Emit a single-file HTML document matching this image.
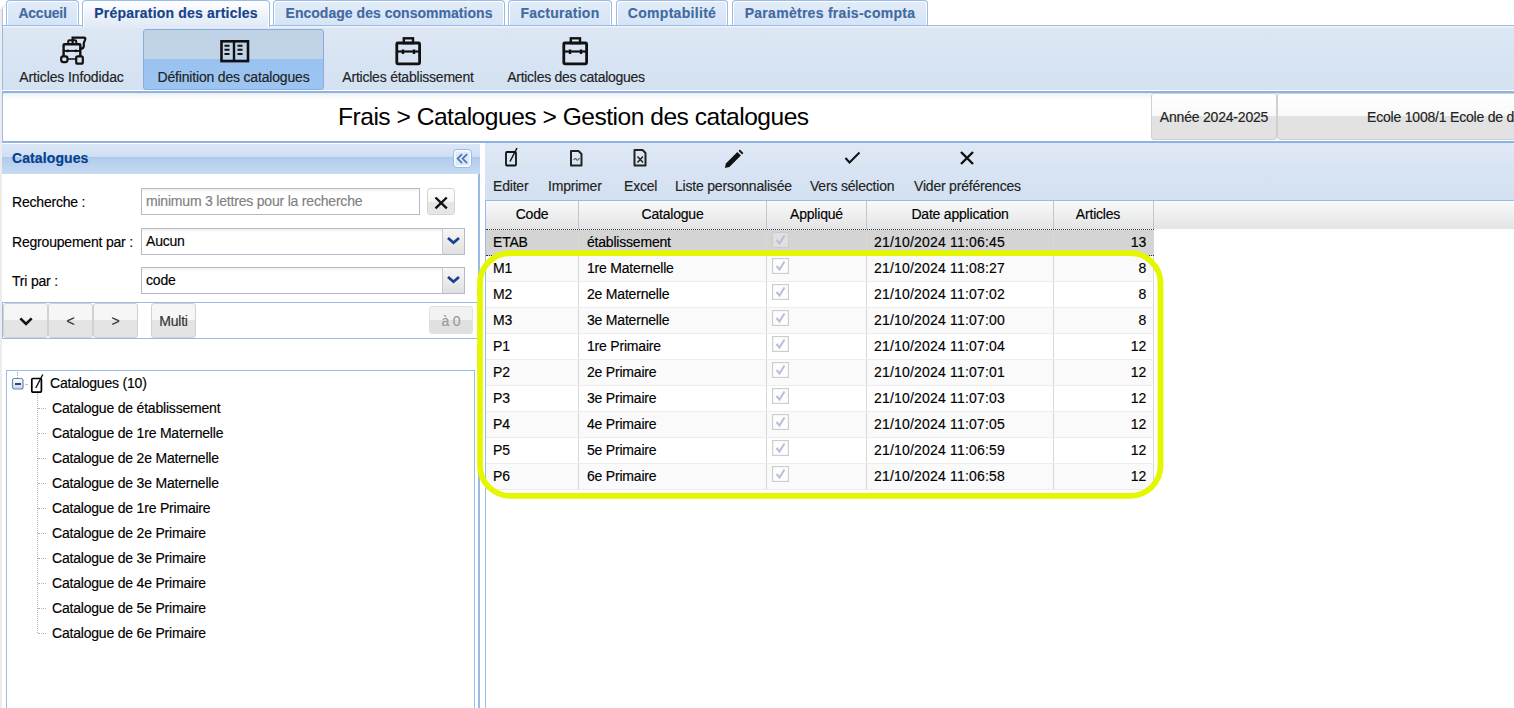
<!DOCTYPE html>
<html><head><meta charset="utf-8">
<style>
*{box-sizing:border-box;margin:0;padding:0}
html,body{width:1514px;height:708px;overflow:hidden;background:#fff;font-family:"Liberation Sans",sans-serif;font-size:14px;letter-spacing:-0.2px;color:#000;-webkit-text-stroke:0.15px currentColor}
.a{position:absolute;white-space:nowrap}
/* tabs */
.tab{position:absolute;top:0;height:25px;border:1px solid #99bbe8;border-bottom:none;border-radius:4px 4px 0 0;box-shadow:inset 1px 1px 0 #fff,inset -1px 0 0 #fff;background:linear-gradient(#e3ecf8,#d6e4f6);font-weight:bold;font-size:14px;color:#416aa3;text-align:center;line-height:24px}
.tab.act{background:linear-gradient(#ffffff,#dfe9f6);color:#15428b;height:27px;z-index:3;border-color:#99bbe8}
.tbtn{position:absolute;top:29px;height:61px;text-align:center;color:#222}
.tbtn .lbl{position:absolute;left:0;right:0;top:40px;line-height:16px}
.btn{position:absolute;border:1px solid #d1d1d1;border-radius:3px;background:linear-gradient(#f6f6f6 0,#f6f6f6 50%,#e4e4e4 50%,#e4e4e4 100%);text-align:center}
.hd{font-weight:normal}
</style></head><body>
<!-- left gray strip -->
<div class="a" style="left:0;top:3px;width:12px;height:705px;border-left:2px solid #ececec;border-top:2px solid #f4f4f4;border-top-left-radius:9px"></div>
<div class="a" style="left:2px;top:9px;width:1px;height:17px;background:#a9c4ea"></div>

<!-- TAB STRIP -->
<div class="a" style="left:2px;top:25px;width:1512px;height:1px;background:#99bbe8"></div>
<div class="tab" style="left:6px;width:73px;letter-spacing:-0.24px">Accueil</div>
<div class="tab act" style="left:82px;width:188px;letter-spacing:0.2px">Préparation des articles</div>
<div class="tab" style="left:273px;width:232px;letter-spacing:0.03px">Encodage des consommations</div>
<div class="tab" style="left:508px;width:104px;letter-spacing:0.25px">Facturation</div>
<div class="tab" style="left:616px;width:112px;letter-spacing:0.3px">Comptabilité</div>
<div class="tab" style="left:732px;width:196px;letter-spacing:0.28px">Paramètres frais-compta</div>

<!-- TOOLBAR -->
<div class="a" style="left:2px;top:26px;width:1512px;height:64px;background:linear-gradient(#eef3fa 0,#eef3fa 1px,#dde7f4 2px,#d3e1f1);border-left:1px solid #99bbe8"></div>
<div class="a" style="left:2px;top:90px;width:1512px;height:1px;background:#fff"></div>
<div class="a" style="left:2px;top:91px;width:1512px;height:2px;background:#8db2e3"></div>

<div class="tbtn" style="left:3px;width:137px"><div class="lbl" style="letter-spacing:-0.12px">Articles Infodidac</div></div>
<div class="tbtn" style="left:143px;width:181px;border:1px solid #89acdc;border-radius:3px;background:linear-gradient(#bfd2e6 0,#c0d3e7 29px,#98c2f0 29px,#9dc5f1 100%)"><div class="lbl" style="top:39px;letter-spacing:-0.18px">Définition des catalogues</div></div>
<div class="tbtn" style="left:330px;width:156px"><div class="lbl" style="letter-spacing:-0.22px">Articles établissement</div></div>
<div class="tbtn" style="left:497px;width:158px"><div class="lbl" style="letter-spacing:-0.28px">Articles des catalogues</div></div>


<!-- top toolbar icons -->
<svg class="a" style="left:55px;top:32px" width="40" height="36">
 <path d="M17.6 11.5 V5.6 H28.5 Q31.2 5.2 30 8 Q28.3 11 28.8 13.5 Q29 16.5 25 17" fill="none" stroke="#111" stroke-width="2.2"/>
 <path d="M8.6 24 V13 Q8.6 12.3 9.5 12.3 H24.5 Q25.3 12.3 25.3 13 V24" fill="none" stroke="#111" stroke-width="2.4"/>
 <path d="M13.2 12 V9.6 Q13.2 8.3 14.5 8.3 H20 Q21.3 8.3 21.3 9.6 V12" fill="none" stroke="#111" stroke-width="2"/>
 <path d="M9 18.9 H25" stroke="#111" stroke-width="1.9"/>
 <circle cx="12.8" cy="18.9" r="1.3" fill="#111"/><circle cx="20.9" cy="18.9" r="1.3" fill="#111"/>
 <rect x="6.2" y="24.3" width="6.3" height="5.8" rx="2" fill="#d7e3f2" stroke="#111" stroke-width="2.2"/>
 <rect x="21.2" y="24.3" width="6.6" height="7.4" rx="1.5" fill="#d7e3f2" stroke="#111" stroke-width="2.2"/>
 <path d="M12.5 27 H21" stroke="#111" stroke-width="1.5"/>
</svg>
<svg class="a" style="left:213px;top:32px" width="40" height="36">
 <rect x="8.5" y="9.3" width="26.5" height="19.8" fill="none" stroke="#111" stroke-width="2.6"/>
 <path d="M21 9.5 V29" stroke="#111" stroke-width="2.4"/>
 <path d="M11.5 13.8 H16.5 M11.5 17.8 H16.5 M11.5 22 H16.5 M24.5 13.8 H29.5 M24.5 17.8 H29.5 M24.5 22 H29.5" stroke="#111" stroke-width="2"/>
</svg>
<svg class="a" style="left:388px;top:32px" width="40" height="36">
 <rect x="8.8" y="11" width="22.8" height="20.8" rx="1" fill="none" stroke="#111" stroke-width="2.8"/>
 <rect x="15.8" y="6.3" width="9.2" height="4.8" fill="none" stroke="#111" stroke-width="2.4"/>
 <path d="M9 19.5 H31.5" stroke="#111" stroke-width="2.2"/>
 <path d="M15 17.5 V22 M26 17.5 V22" stroke="#111" stroke-width="2.4"/>
</svg>
<svg class="a" style="left:555px;top:32px" width="40" height="36">
 <rect x="8.8" y="11" width="22.8" height="20.8" rx="1" fill="none" stroke="#111" stroke-width="2.8"/>
 <rect x="15.8" y="6.3" width="9.2" height="4.8" fill="none" stroke="#111" stroke-width="2.4"/>
 <path d="M9 19.5 H31.5" stroke="#111" stroke-width="2.2"/>
 <path d="M15 17.5 V22 M26 17.5 V22" stroke="#111" stroke-width="2.4"/>
</svg>

<!-- TITLE BAR -->
<div class="a" style="left:2px;top:93px;width:1512px;height:48px;background:linear-gradient(#e8ebeb 0,#f7f8f8 3px,#fff 8px,#fff);border-left:1px solid #99bbe8"></div>
<div class="a" style="left:2px;top:141px;width:1512px;height:2px;background:#8db2e3"></div>
<div class="a" style="left:338px;top:102px;font-size:24.6px;letter-spacing:-0.5px;line-height:30px;-webkit-text-stroke:0">Frais &gt; Catalogues &gt; Gestion des catalogues</div>
<div class="btn" style="left:1151px;top:93px;width:126px;height:47px;background:linear-gradient(#fff 0,#f9f9f9 50%,#e2e2e2 50%,#e2e2e2 100%);border-color:#d0d0d0;line-height:47px;color:#222">Année 2024-2025</div>
<div class="btn" style="left:1277px;top:93px;width:260px;height:47px;background:linear-gradient(#fff 0,#f9f9f9 50%,#e2e2e2 50%,#e2e2e2 100%);border-color:#d0d0d0;line-height:47px;color:#222;text-align:left;padding-left:89px">Ecole 1008/1 Ecole de de</div>

<div class="a" style="left:2px;top:143px;width:478px;height:1px;background:#fff"></div>


<!-- LEFT PANEL -->
<div class="a" style="left:2px;top:144px;width:478px;height:30px;background:linear-gradient(#dbe7f6 0,#cfdff4 13px,#a9c6ec 13px,#b3cdee 15px,#bcd3f0 22px,#c8dbf2 30px)"></div>
<div class="a" style="left:12px;top:150px;font-weight:bold;font-size:14px;color:#04408c;line-height:16px;letter-spacing:0.1px">Catalogues</div>
<div class="a" style="left:453px;top:149px;width:19px;height:19px;border:1px solid #99bbe8;border-radius:4px;background:#dde9f9;box-shadow:inset 0 0 0 1.5px #fbfdff">
<svg width="17" height="17" style="position:absolute;left:0;top:0"><path d="M7.6 4.6 L3.6 8.6 L7.6 12.6 M12.6 4.6 L8.6 8.6 L12.6 12.6" fill="none" stroke="#4677b4" stroke-width="1.7" stroke-linecap="round"/></svg></div>
<div class="a" style="left:478px;top:174px;width:2px;height:534px;background:#99bbe8"></div>

<div class="a" style="left:12px;top:194px;line-height:16px">Recherche :</div>
<div class="a" style="left:12px;top:234px;line-height:16px">Regroupement par :</div>
<div class="a" style="left:12px;top:273px;line-height:16px">Tri par :</div>

<div class="a" style="left:141px;top:188px;width:279px;height:27px;border:1px solid #b5b8c8;background:linear-gradient(#f0f0f0 0,#fff 4px,#fff);color:#808080;padding-left:4px;line-height:25px">minimum 3 lettres pour la recherche</div>
<div class="btn" style="left:427px;top:188px;width:28px;height:27px;background:linear-gradient(#fdfdfd 0,#f6f6f6 50%,#e6e6e6 50%,#e6e6e6 100%);border-color:#d4d4d4;border-radius:3px">
<svg width="26" height="25" style="position:absolute;left:0;top:0"><path d="M7.5 8.5 L18.8 19.3 M18.8 8.5 L7.5 19.3" fill="none" stroke="#111" stroke-width="2.4"/></svg></div>

<div class="a" style="left:141px;top:228px;width:324px;height:27px;border:1px solid #b5b8c8;background:linear-gradient(#f0f0f0 0,#fff 4px,#fff);padding-left:4px;line-height:25px">Aucun</div>
<div class="a" style="left:442px;top:228px;width:23px;height:27px;border:1px solid #b5b8c8;border-left-color:#c8c8d0;background:linear-gradient(#f6f6f6,#e0e0e0)">
<svg width="21" height="25" style="position:absolute;left:0;top:0"><path d="M5 9 L10.5 13.8 L16 9" fill="none" stroke="#15428b" stroke-width="2.7"/></svg></div>
<div class="a" style="left:141px;top:267px;width:324px;height:27px;border:1px solid #b5b8c8;background:linear-gradient(#f0f0f0 0,#fff 4px,#fff);padding-left:4px;line-height:25px">code</div>
<div class="a" style="left:442px;top:267px;width:23px;height:27px;border:1px solid #b5b8c8;border-left-color:#c8c8d0;background:linear-gradient(#f6f6f6,#e0e0e0)">
<svg width="21" height="25" style="position:absolute;left:0;top:0"><path d="M5 9 L10.5 13.8 L16 9" fill="none" stroke="#15428b" stroke-width="2.7"/></svg></div>

<!-- button bar -->
<div class="a" style="left:2px;top:302px;width:476px;height:37px;border-top:1px solid #99bbe8;border-bottom:1px solid #99bbe8;border-left:1px solid #99bbe8;background:#fff"></div>
<div class="btn" style="left:3px;top:303px;width:45px;height:35px">
<svg width="43" height="33" style="position:absolute;left:0;top:0"><path d="M16.3 14.3 L22 20 L27.7 14.3" fill="none" stroke="#111" stroke-width="2.6"/></svg></div>
<div class="btn" style="left:48px;top:303px;width:45px;height:35px;line-height:35px;color:#333">&lt;</div>
<div class="btn" style="left:93px;top:303px;width:45px;height:35px;line-height:35px;color:#333">&gt;</div>
<div class="btn" style="left:151px;top:303px;width:45px;height:35px;line-height:35px;color:#333">Multi</div>
<div class="btn" style="left:429px;top:306px;width:44px;height:28px;line-height:28px;color:#999;background:linear-gradient(#f2f2f2 0,#f2f2f2 50%,#e0e0e0 50%,#e0e0e0 100%);border-color:#e0e0e0">à 0</div>

<!-- tree -->
<div class="a" style="left:6px;top:370px;width:469px;height:340px;border:1px solid #99bbe8;background:#fff"></div>
<div class="a" style="left:17px;top:372px;width:0;height:6px;border-left:1px dotted #b4b4b4"></div>
<div class="a" style="left:37px;top:393px;width:0;height:240px;border-left:1px dotted #b4b4b4"></div>
<svg class="a" style="left:11px;top:377px" width="14" height="14"><defs><linearGradient id="mg" x1="0" y1="0" x2="0" y2="1"><stop offset="0" stop-color="#fff"/><stop offset="1" stop-color="#c9d8ee"/></linearGradient></defs><rect x="1.5" y="1.5" width="10.5" height="10.5" rx="2" fill="url(#mg)" stroke="#6a88b4" stroke-width="1.2"/><rect x="4" y="6" width="6" height="2" fill="#2b4a7a"/></svg>
<div class="a" style="left:25px;top:384px;width:2px;border-top:1px dotted #c0c0c0"></div>
<svg class="a" style="left:29px;top:372px" width="16" height="22"><rect x="2.8" y="6.5" width="9.6" height="13.6" rx="1" fill="none" stroke="#000" stroke-width="1.7"/><path d="M6.8 16 L13.8 2.5" stroke="#111" stroke-width="1.4" fill="none"/></svg>
<div class="a" style="left:50px;top:375px;line-height:16px">Catalogues (10)</div>
<div class="a" style="left:38px;top:408px;width:8px;border-top:1px dotted #b4b4b4"></div><div class="a" style="left:52px;top:400px;line-height:16px">Catalogue de établissement</div>
<div class="a" style="left:38px;top:433px;width:8px;border-top:1px dotted #b4b4b4"></div><div class="a" style="left:52px;top:425px;line-height:16px">Catalogue de 1re Maternelle</div>
<div class="a" style="left:38px;top:458px;width:8px;border-top:1px dotted #b4b4b4"></div><div class="a" style="left:52px;top:450px;line-height:16px">Catalogue de 2e Maternelle</div>
<div class="a" style="left:38px;top:483px;width:8px;border-top:1px dotted #b4b4b4"></div><div class="a" style="left:52px;top:475px;line-height:16px">Catalogue de 3e Maternelle</div>
<div class="a" style="left:38px;top:508px;width:8px;border-top:1px dotted #b4b4b4"></div><div class="a" style="left:52px;top:500px;line-height:16px">Catalogue de 1re Primaire</div>
<div class="a" style="left:38px;top:533px;width:8px;border-top:1px dotted #b4b4b4"></div><div class="a" style="left:52px;top:525px;line-height:16px">Catalogue de 2e Primaire</div>
<div class="a" style="left:38px;top:558px;width:8px;border-top:1px dotted #b4b4b4"></div><div class="a" style="left:52px;top:550px;line-height:16px">Catalogue de 3e Primaire</div>
<div class="a" style="left:38px;top:583px;width:8px;border-top:1px dotted #b4b4b4"></div><div class="a" style="left:52px;top:575px;line-height:16px">Catalogue de 4e Primaire</div>
<div class="a" style="left:38px;top:608px;width:8px;border-top:1px dotted #b4b4b4"></div><div class="a" style="left:52px;top:600px;line-height:16px">Catalogue de 5e Primaire</div>
<div class="a" style="left:38px;top:633px;width:8px;border-top:1px dotted #b4b4b4"></div><div class="a" style="left:52px;top:625px;line-height:16px">Catalogue de 6e Primaire</div>


<!-- RIGHT PANEL toolbar -->
<div class="a" style="left:485px;top:143px;width:1029px;height:57px;background:linear-gradient(#dfe8f5,#d2e0f1)"></div>
<svg class="a" style="left:485px;top:143px" width="560" height="30">
 <!-- editer -->
 <rect x="21" y="9" width="10" height="13.5" rx="1" fill="none" stroke="#111" stroke-width="1.8"/>
 <path d="M25 18.5 L32 5" stroke="#111" stroke-width="1.5" fill="none"/>
 <!-- imprimer -->
 <path d="M86 8 H93.5 L96.5 11 V22.5 H86 Z" fill="none" stroke="#222" stroke-width="2" stroke-linejoin="round"/>
 <path d="M88.5 17 Q90.5 14.5 91.5 16.5 T94.5 15" fill="none" stroke="#555" stroke-width="1.1"/>
 <!-- excel -->
 <path d="M149.5 7 H157.5 L160.5 10 V22.5 H149.5 Z" fill="none" stroke="#222" stroke-width="2" stroke-linejoin="round"/>
 <path d="M152.5 13.5 L158 19.5 M158 13.5 L152.5 19.5" stroke="#222" stroke-width="1.5"/>
 <!-- pencil -->
 <g transform="translate(-1.6,1.6)"><path d="M241.5 23.5 L242.5 19 L254 7.5 L257.5 11 L246 22.5 Z" fill="#111"/>
 <path d="M255.2 6.3 L256.5 5 L260 8.5 L258.7 9.8 Z" fill="#111"/></g>
 <!-- check -->
 <path d="M360.5 15 L364.5 19.5 L374.5 9.5" fill="none" stroke="#111" stroke-width="2"/>
 <!-- X -->
 <path d="M476 9 L488 21 M488 9 L476 21" fill="none" stroke="#111" stroke-width="2.4"/>
</svg>
<div class="a" style="left:493px;top:178px;line-height:16px;color:#222">Editer</div>
<div class="a" style="left:548px;top:178px;line-height:16px;color:#222">Imprimer</div>
<div class="a" style="left:624px;top:178px;line-height:16px;color:#222">Excel</div>
<div class="a" style="left:675px;top:178px;line-height:16px;color:#222">Liste personnalisée</div>
<div class="a" style="left:810px;top:178px;line-height:16px;color:#222">Vers sélection</div>
<div class="a" style="left:914px;top:178px;line-height:16px;color:#222">Vider préférences</div>

<!-- GRID -->
<div class="a" style="left:485px;top:200px;width:1029px;height:508px;border-top:1px solid #99bbe8;border-left:1px solid #99bbe8;background:#fff"></div>
<div class="a" style="left:486px;top:201px;width:1028px;height:28px;background:linear-gradient(#f9f9f9,#e3e4e6)"></div>
<div class="a" style="left:486px;top:201px;width:93px;height:28px;border-right:1px solid #c5c5c5;text-align:center;line-height:26px">Code</div>
<div class="a" style="left:579px;top:201px;width:188px;height:28px;border-right:1px solid #c5c5c5;text-align:center;line-height:26px">Catalogue</div>
<div class="a" style="left:767px;top:201px;width:100px;height:28px;border-right:1px solid #c5c5c5;text-align:center;line-height:26px">Appliqué</div>
<div class="a" style="left:867px;top:201px;width:187px;height:28px;border-right:1px solid #c5c5c5;text-align:center;line-height:26px">Date application</div>
<div class="a" style="left:1054px;top:201px;width:100px;height:28px;border-right:1px solid #c5c5c5;text-align:center;line-height:26px;padding-right:11px">Articles</div>
<div class="a" style="left:486px;top:229px;width:668px;height:1px;border-top:1px dotted #333"></div>
<div class="a" style="left:486px;top:230px;width:668px;height:26px;background:#d4d4d4;border-bottom:1px dotted #333"></div>
<div class="a" style="left:578px;top:230px;width:1px;height:25px;background:#d8d8d8"></div><div class="a" style="left:766px;top:230px;width:1px;height:25px;background:#d8d8d8"></div><div class="a" style="left:866px;top:230px;width:1px;height:25px;background:#d8d8d8"></div><div class="a" style="left:1053px;top:230px;width:1px;height:25px;background:#d8d8d8"></div><div class="a" style="left:1153px;top:230px;width:1px;height:25px;background:#d8d8d8"></div><div class="a" style="left:493px;top:234px;line-height:16px">ETAB</div><div class="a" style="left:587px;top:234px;line-height:16px">établissement</div><svg class="a" style="left:772px;top:232px" width="17" height="16"><rect x="0.5" y="0.5" width="16" height="15" fill="#e0e0e0" stroke="#cdcdcd" stroke-width="1.3"/><path d="M4.5 8 L7.5 11.5 L12.5 3.5" fill="none" stroke="#b7c0da" stroke-width="2"/></svg><div class="a" style="left:874px;top:234px;line-height:16px;letter-spacing:0.19px">21/10/2024 11:06:45</div><div class="a" style="left:1054px;top:234px;width:92px;text-align:right;line-height:16px">13</div>
<div class="a" style="left:486px;top:256px;width:668px;height:26px;background:#fafafa;border-bottom:1px solid #ededed"></div>
<div class="a" style="left:578px;top:256px;width:1px;height:25px;background:#d8d8d8"></div><div class="a" style="left:766px;top:256px;width:1px;height:25px;background:#d8d8d8"></div><div class="a" style="left:866px;top:256px;width:1px;height:25px;background:#d8d8d8"></div><div class="a" style="left:1053px;top:256px;width:1px;height:25px;background:#d8d8d8"></div><div class="a" style="left:1153px;top:256px;width:1px;height:25px;background:#d8d8d8"></div><div class="a" style="left:493px;top:260px;line-height:16px">M1</div><div class="a" style="left:587px;top:260px;line-height:16px">1re Maternelle</div><svg class="a" style="left:772px;top:258px" width="17" height="16"><rect x="0.5" y="0.5" width="16" height="15" fill="#fdfdfd" stroke="#cdcdcd" stroke-width="1.3"/><path d="M4.5 8 L7.5 11.5 L12.5 3.5" fill="none" stroke="#b7c0da" stroke-width="2"/></svg><div class="a" style="left:874px;top:260px;line-height:16px;letter-spacing:0.19px">21/10/2024 11:08:27</div><div class="a" style="left:1054px;top:260px;width:92px;text-align:right;line-height:16px">8</div>
<div class="a" style="left:486px;top:282px;width:668px;height:26px;background:#fff;border-bottom:1px solid #ededed"></div>
<div class="a" style="left:578px;top:282px;width:1px;height:25px;background:#d8d8d8"></div><div class="a" style="left:766px;top:282px;width:1px;height:25px;background:#d8d8d8"></div><div class="a" style="left:866px;top:282px;width:1px;height:25px;background:#d8d8d8"></div><div class="a" style="left:1053px;top:282px;width:1px;height:25px;background:#d8d8d8"></div><div class="a" style="left:1153px;top:282px;width:1px;height:25px;background:#d8d8d8"></div><div class="a" style="left:493px;top:286px;line-height:16px">M2</div><div class="a" style="left:587px;top:286px;line-height:16px">2e Maternelle</div><svg class="a" style="left:772px;top:284px" width="17" height="16"><rect x="0.5" y="0.5" width="16" height="15" fill="#fdfdfd" stroke="#cdcdcd" stroke-width="1.3"/><path d="M4.5 8 L7.5 11.5 L12.5 3.5" fill="none" stroke="#b7c0da" stroke-width="2"/></svg><div class="a" style="left:874px;top:286px;line-height:16px;letter-spacing:0.19px">21/10/2024 11:07:02</div><div class="a" style="left:1054px;top:286px;width:92px;text-align:right;line-height:16px">8</div>
<div class="a" style="left:486px;top:308px;width:668px;height:26px;background:#fafafa;border-bottom:1px solid #ededed"></div>
<div class="a" style="left:578px;top:308px;width:1px;height:25px;background:#d8d8d8"></div><div class="a" style="left:766px;top:308px;width:1px;height:25px;background:#d8d8d8"></div><div class="a" style="left:866px;top:308px;width:1px;height:25px;background:#d8d8d8"></div><div class="a" style="left:1053px;top:308px;width:1px;height:25px;background:#d8d8d8"></div><div class="a" style="left:1153px;top:308px;width:1px;height:25px;background:#d8d8d8"></div><div class="a" style="left:493px;top:312px;line-height:16px">M3</div><div class="a" style="left:587px;top:312px;line-height:16px">3e Maternelle</div><svg class="a" style="left:772px;top:310px" width="17" height="16"><rect x="0.5" y="0.5" width="16" height="15" fill="#fdfdfd" stroke="#cdcdcd" stroke-width="1.3"/><path d="M4.5 8 L7.5 11.5 L12.5 3.5" fill="none" stroke="#b7c0da" stroke-width="2"/></svg><div class="a" style="left:874px;top:312px;line-height:16px;letter-spacing:0.19px">21/10/2024 11:07:00</div><div class="a" style="left:1054px;top:312px;width:92px;text-align:right;line-height:16px">8</div>
<div class="a" style="left:486px;top:334px;width:668px;height:26px;background:#fff;border-bottom:1px solid #ededed"></div>
<div class="a" style="left:578px;top:334px;width:1px;height:25px;background:#d8d8d8"></div><div class="a" style="left:766px;top:334px;width:1px;height:25px;background:#d8d8d8"></div><div class="a" style="left:866px;top:334px;width:1px;height:25px;background:#d8d8d8"></div><div class="a" style="left:1053px;top:334px;width:1px;height:25px;background:#d8d8d8"></div><div class="a" style="left:1153px;top:334px;width:1px;height:25px;background:#d8d8d8"></div><div class="a" style="left:493px;top:338px;line-height:16px">P1</div><div class="a" style="left:587px;top:338px;line-height:16px">1re Primaire</div><svg class="a" style="left:772px;top:336px" width="17" height="16"><rect x="0.5" y="0.5" width="16" height="15" fill="#fdfdfd" stroke="#cdcdcd" stroke-width="1.3"/><path d="M4.5 8 L7.5 11.5 L12.5 3.5" fill="none" stroke="#b7c0da" stroke-width="2"/></svg><div class="a" style="left:874px;top:338px;line-height:16px;letter-spacing:0.19px">21/10/2024 11:07:04</div><div class="a" style="left:1054px;top:338px;width:92px;text-align:right;line-height:16px">12</div>
<div class="a" style="left:486px;top:360px;width:668px;height:26px;background:#fafafa;border-bottom:1px solid #ededed"></div>
<div class="a" style="left:578px;top:360px;width:1px;height:25px;background:#d8d8d8"></div><div class="a" style="left:766px;top:360px;width:1px;height:25px;background:#d8d8d8"></div><div class="a" style="left:866px;top:360px;width:1px;height:25px;background:#d8d8d8"></div><div class="a" style="left:1053px;top:360px;width:1px;height:25px;background:#d8d8d8"></div><div class="a" style="left:1153px;top:360px;width:1px;height:25px;background:#d8d8d8"></div><div class="a" style="left:493px;top:364px;line-height:16px">P2</div><div class="a" style="left:587px;top:364px;line-height:16px">2e Primaire</div><svg class="a" style="left:772px;top:362px" width="17" height="16"><rect x="0.5" y="0.5" width="16" height="15" fill="#fdfdfd" stroke="#cdcdcd" stroke-width="1.3"/><path d="M4.5 8 L7.5 11.5 L12.5 3.5" fill="none" stroke="#b7c0da" stroke-width="2"/></svg><div class="a" style="left:874px;top:364px;line-height:16px;letter-spacing:0.19px">21/10/2024 11:07:01</div><div class="a" style="left:1054px;top:364px;width:92px;text-align:right;line-height:16px">12</div>
<div class="a" style="left:486px;top:386px;width:668px;height:26px;background:#fff;border-bottom:1px solid #ededed"></div>
<div class="a" style="left:578px;top:386px;width:1px;height:25px;background:#d8d8d8"></div><div class="a" style="left:766px;top:386px;width:1px;height:25px;background:#d8d8d8"></div><div class="a" style="left:866px;top:386px;width:1px;height:25px;background:#d8d8d8"></div><div class="a" style="left:1053px;top:386px;width:1px;height:25px;background:#d8d8d8"></div><div class="a" style="left:1153px;top:386px;width:1px;height:25px;background:#d8d8d8"></div><div class="a" style="left:493px;top:390px;line-height:16px">P3</div><div class="a" style="left:587px;top:390px;line-height:16px">3e Primaire</div><svg class="a" style="left:772px;top:388px" width="17" height="16"><rect x="0.5" y="0.5" width="16" height="15" fill="#fdfdfd" stroke="#cdcdcd" stroke-width="1.3"/><path d="M4.5 8 L7.5 11.5 L12.5 3.5" fill="none" stroke="#b7c0da" stroke-width="2"/></svg><div class="a" style="left:874px;top:390px;line-height:16px;letter-spacing:0.19px">21/10/2024 11:07:03</div><div class="a" style="left:1054px;top:390px;width:92px;text-align:right;line-height:16px">12</div>
<div class="a" style="left:486px;top:412px;width:668px;height:26px;background:#fafafa;border-bottom:1px solid #ededed"></div>
<div class="a" style="left:578px;top:412px;width:1px;height:25px;background:#d8d8d8"></div><div class="a" style="left:766px;top:412px;width:1px;height:25px;background:#d8d8d8"></div><div class="a" style="left:866px;top:412px;width:1px;height:25px;background:#d8d8d8"></div><div class="a" style="left:1053px;top:412px;width:1px;height:25px;background:#d8d8d8"></div><div class="a" style="left:1153px;top:412px;width:1px;height:25px;background:#d8d8d8"></div><div class="a" style="left:493px;top:416px;line-height:16px">P4</div><div class="a" style="left:587px;top:416px;line-height:16px">4e Primaire</div><svg class="a" style="left:772px;top:414px" width="17" height="16"><rect x="0.5" y="0.5" width="16" height="15" fill="#fdfdfd" stroke="#cdcdcd" stroke-width="1.3"/><path d="M4.5 8 L7.5 11.5 L12.5 3.5" fill="none" stroke="#b7c0da" stroke-width="2"/></svg><div class="a" style="left:874px;top:416px;line-height:16px;letter-spacing:0.19px">21/10/2024 11:07:05</div><div class="a" style="left:1054px;top:416px;width:92px;text-align:right;line-height:16px">12</div>
<div class="a" style="left:486px;top:438px;width:668px;height:26px;background:#fff;border-bottom:1px solid #ededed"></div>
<div class="a" style="left:578px;top:438px;width:1px;height:25px;background:#d8d8d8"></div><div class="a" style="left:766px;top:438px;width:1px;height:25px;background:#d8d8d8"></div><div class="a" style="left:866px;top:438px;width:1px;height:25px;background:#d8d8d8"></div><div class="a" style="left:1053px;top:438px;width:1px;height:25px;background:#d8d8d8"></div><div class="a" style="left:1153px;top:438px;width:1px;height:25px;background:#d8d8d8"></div><div class="a" style="left:493px;top:442px;line-height:16px">P5</div><div class="a" style="left:587px;top:442px;line-height:16px">5e Primaire</div><svg class="a" style="left:772px;top:440px" width="17" height="16"><rect x="0.5" y="0.5" width="16" height="15" fill="#fdfdfd" stroke="#cdcdcd" stroke-width="1.3"/><path d="M4.5 8 L7.5 11.5 L12.5 3.5" fill="none" stroke="#b7c0da" stroke-width="2"/></svg><div class="a" style="left:874px;top:442px;line-height:16px;letter-spacing:0.19px">21/10/2024 11:06:59</div><div class="a" style="left:1054px;top:442px;width:92px;text-align:right;line-height:16px">12</div>
<div class="a" style="left:486px;top:464px;width:668px;height:26px;background:#fafafa;border-bottom:1px solid #ededed"></div>
<div class="a" style="left:578px;top:464px;width:1px;height:25px;background:#d8d8d8"></div><div class="a" style="left:766px;top:464px;width:1px;height:25px;background:#d8d8d8"></div><div class="a" style="left:866px;top:464px;width:1px;height:25px;background:#d8d8d8"></div><div class="a" style="left:1053px;top:464px;width:1px;height:25px;background:#d8d8d8"></div><div class="a" style="left:1153px;top:464px;width:1px;height:25px;background:#d8d8d8"></div><div class="a" style="left:493px;top:468px;line-height:16px">P6</div><div class="a" style="left:587px;top:468px;line-height:16px">6e Primaire</div><svg class="a" style="left:772px;top:466px" width="17" height="16"><rect x="0.5" y="0.5" width="16" height="15" fill="#fdfdfd" stroke="#cdcdcd" stroke-width="1.3"/><path d="M4.5 8 L7.5 11.5 L12.5 3.5" fill="none" stroke="#b7c0da" stroke-width="2"/></svg><div class="a" style="left:874px;top:468px;line-height:16px;letter-spacing:0.19px">21/10/2024 11:06:58</div><div class="a" style="left:1054px;top:468px;width:92px;text-align:right;line-height:16px">12</div>

<!-- highlight -->
<svg class="a" style="left:0;top:0" width="1514" height="708"><rect x="480" y="253.2" width="680.5" height="242.6" rx="30" ry="30" fill="none" stroke="#e4f700" stroke-width="5.8"/></svg>

</body></html>
